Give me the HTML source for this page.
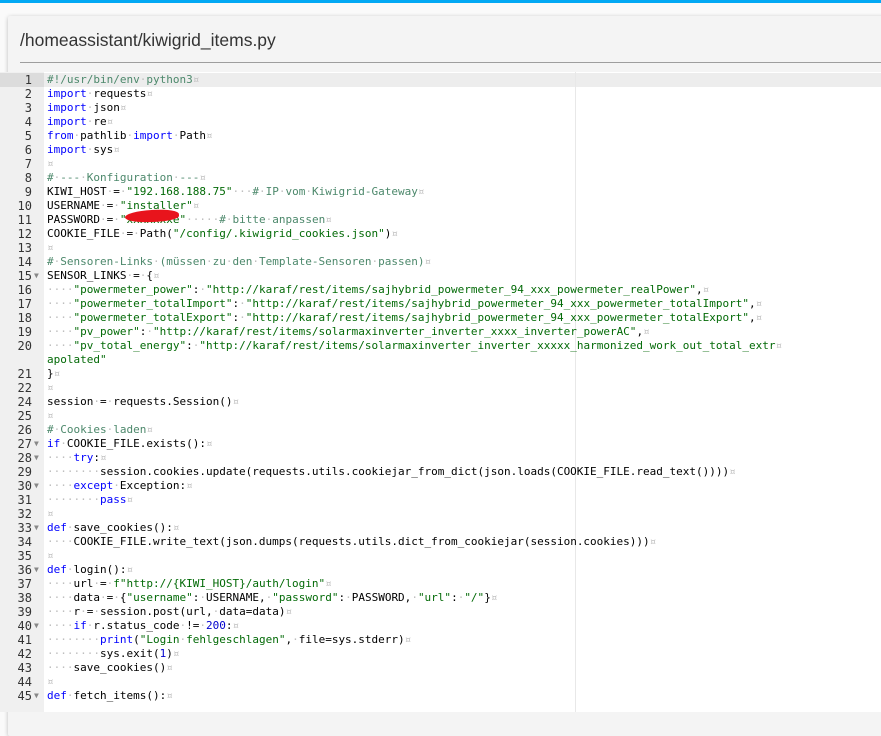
<!DOCTYPE html>
<html><head><meta charset="utf-8">
<style>
*{margin:0;padding:0;box-sizing:border-box}
html,body{width:881px;height:703px;overflow:hidden;background:#fafafa;font-family:"Liberation Sans",sans-serif}
.top{position:absolute;left:0;top:0;width:881px;height:3px;background:#03a9f4}
.card{position:absolute;left:8px;top:16px;width:900px;height:720px;background:#f4f4f4;box-shadow:0 1px 4px rgba(0,0,0,.25);border-radius:2px}
.title{position:absolute;left:20px;top:30px;font-size:17.5px;color:#333}
.hr{position:absolute;left:20px;top:62px;width:870px;height:1px;background:#9e9e9e}
.ed{position:absolute;left:0;top:72px;width:881px;height:640px;background:#fff;overflow:hidden}
.gut{position:absolute;left:0;top:0;width:44px;height:100%;background:#f0f0f0}
.pm{position:absolute;left:575px;top:0;width:1px;height:100%;background:#e8e8e8}
.act{position:absolute;left:44px;top:1px;width:837px;height:14px;background:#ededed}
.gact{position:absolute;left:0;top:1px;width:44px;height:14px;background:#dcdcdc}
.code{position:absolute;left:0;top:1px;width:881px;font-family:"DejaVu Sans Mono","Liberation Mono",monospace;font-size:11px;line-height:14px;color:#000;white-space:normal}
.r{height:14px;position:relative}
.ln{position:absolute;left:0;width:32px;text-align:right;color:#333;white-space:pre;font-size:12px}
.f{position:absolute;left:34px;color:#888;font-size:8px}
.t{position:absolute;left:47px;white-space:pre}
b{font-weight:normal;color:#bfbfbf}
.k{color:#0000ff}.s{color:#036a07}.c{color:#4c886b}.n{color:#0000cd}
.red{position:absolute;left:125px;top:210px;width:54px;height:12px;background:#e8141c;border-radius:50% 45% 40% 50%;transform:rotate(-3deg)}
</style></head><body>
<div class="top"></div>
<div class="card"></div>
<div class="title">/homeassistant/kiwigrid_items.py</div>
<div class="hr"></div>
<div class="ed">
<div class="gut"></div>
<div class="act"></div><div class="gact"></div>
<div class="pm"></div>
<div class="code">
<div class="r"><span class="ln">1</span><span class="t"><span class="c">#!/usr/bin/env<b>·</b>python3</span><b>¤</b></span></div>
<div class="r"><span class="ln">2</span><span class="t"><span class="k">import</span><b>·</b>requests<b>¤</b></span></div>
<div class="r"><span class="ln">3</span><span class="t"><span class="k">import</span><b>·</b>json<b>¤</b></span></div>
<div class="r"><span class="ln">4</span><span class="t"><span class="k">import</span><b>·</b>re<b>¤</b></span></div>
<div class="r"><span class="ln">5</span><span class="t"><span class="k">from</span><b>·</b>pathlib<b>·</b><span class="k">import</span><b>·</b>Path<b>¤</b></span></div>
<div class="r"><span class="ln">6</span><span class="t"><span class="k">import</span><b>·</b>sys<b>¤</b></span></div>
<div class="r"><span class="ln">7</span><span class="t"><b>¤</b></span></div>
<div class="r"><span class="ln">8</span><span class="t"><span class="c">#<b>·</b>---<b>·</b>Konfiguration<b>·</b>---</span><b>¤</b></span></div>
<div class="r"><span class="ln">9</span><span class="t">KIWI_HOST<b>·</b>=<b>·</b><span class="s">"192.168.188.75"</span><b>···</b><span class="c">#<b>·</b>IP<b>·</b>vom<b>·</b>Kiwigrid-Gateway</span><b>¤</b></span></div>
<div class="r"><span class="ln">10</span><span class="t">USERNAME<b>·</b>=<b>·</b><span class="s">"installer"</span><b>¤</b></span></div>
<div class="r"><span class="ln">11</span><span class="t">PASSWORD<b>·</b>=<b>·</b><span class="s">"xxxxxxxe"</span><b>·····</b><span class="c">#<b>·</b>bitte<b>·</b>anpassen</span><b>¤</b></span></div>
<div class="r"><span class="ln">12</span><span class="t">COOKIE_FILE<b>·</b>=<b>·</b>Path(<span class="s">"/config/.kiwigrid_cookies.json"</span>)<b>¤</b></span></div>
<div class="r"><span class="ln">13</span><span class="t"><b>¤</b></span></div>
<div class="r"><span class="ln">14</span><span class="t"><span class="c">#<b>·</b>Sensoren-Links<b>·</b>(müssen<b>·</b>zu<b>·</b>den<b>·</b>Template-Sensoren<b>·</b>passen)</span><b>¤</b></span></div>
<div class="r"><span class="ln">15</span><span class="f">▼</span><span class="t">SENSOR_LINKS<b>·</b>=<b>·</b>{<b>¤</b></span></div>
<div class="r"><span class="ln">16</span><span class="t"><b>····</b><span class="s">"powermeter_power"</span>:<b>·</b><span class="s">"http://karaf/rest/items/sajhybrid_powermeter_94_xxx_powermeter_realPower"</span>,<b>¤</b></span></div>
<div class="r"><span class="ln">17</span><span class="t"><b>····</b><span class="s">"powermeter_totalImport"</span>:<b>·</b><span class="s">"http://karaf/rest/items/sajhybrid_powermeter_94_xxx_powermeter_totalImport"</span>,<b>¤</b></span></div>
<div class="r"><span class="ln">18</span><span class="t"><b>····</b><span class="s">"powermeter_totalExport"</span>:<b>·</b><span class="s">"http://karaf/rest/items/sajhybrid_powermeter_94_xxx_powermeter_totalExport"</span>,<b>¤</b></span></div>
<div class="r"><span class="ln">19</span><span class="t"><b>····</b><span class="s">"pv_power"</span>:<b>·</b><span class="s">"http://karaf/rest/items/solarmaxinverter_inverter_xxxx_inverter_powerAC"</span>,<b>¤</b></span></div>
<div class="r"><span class="ln">20</span><span class="t"><b>····</b><span class="s">"pv_total_energy"</span>:<b>·</b><span class="s">"http://karaf/rest/items/solarmaxinverter_inverter_xxxxx_harmonized_work_out_total_extr</span><b>¤</b></span></div>
<div class="r"><span class="t"><span class="s">apolated"</span></span></div>
<div class="r"><span class="ln">21</span><span class="t">}<b>¤</b></span></div>
<div class="r"><span class="ln">22</span><span class="t"><b>¤</b></span></div>
<div class="r"><span class="ln">24</span><span class="t">session<b>·</b>=<b>·</b>requests.Session()<b>¤</b></span></div>
<div class="r"><span class="ln">25</span><span class="t"><b>¤</b></span></div>
<div class="r"><span class="ln">26</span><span class="t"><span class="c">#<b>·</b>Cookies<b>·</b>laden</span><b>¤</b></span></div>
<div class="r"><span class="ln">27</span><span class="f">▼</span><span class="t"><span class="k">if</span><b>·</b>COOKIE_FILE.exists():<b>¤</b></span></div>
<div class="r"><span class="ln">28</span><span class="f">▼</span><span class="t"><b>····</b><span class="k">try</span>:<b>¤</b></span></div>
<div class="r"><span class="ln">29</span><span class="t"><b>········</b>session.cookies.update(requests.utils.cookiejar_from_dict(json.loads(COOKIE_FILE.read_text())))<b>¤</b></span></div>
<div class="r"><span class="ln">30</span><span class="f">▼</span><span class="t"><b>····</b><span class="k">except</span><b>·</b>Exception:<b>¤</b></span></div>
<div class="r"><span class="ln">31</span><span class="t"><b>········</b><span class="k">pass</span><b>¤</b></span></div>
<div class="r"><span class="ln">32</span><span class="t"><b>¤</b></span></div>
<div class="r"><span class="ln">33</span><span class="f">▼</span><span class="t"><span class="k">def</span><b>·</b>save_cookies():<b>¤</b></span></div>
<div class="r"><span class="ln">34</span><span class="t"><b>····</b>COOKIE_FILE.write_text(json.dumps(requests.utils.dict_from_cookiejar(session.cookies)))<b>¤</b></span></div>
<div class="r"><span class="ln">35</span><span class="t"><b>¤</b></span></div>
<div class="r"><span class="ln">36</span><span class="f">▼</span><span class="t"><span class="k">def</span><b>·</b>login():<b>¤</b></span></div>
<div class="r"><span class="ln">37</span><span class="t"><b>····</b>url<b>·</b>=<b>·</b><span class="s">f"http://{KIWI_HOST}/auth/login"</span><b>¤</b></span></div>
<div class="r"><span class="ln">38</span><span class="t"><b>····</b>data<b>·</b>=<b>·</b>{<span class="s">"username"</span>:<b>·</b>USERNAME,<b>·</b><span class="s">"password"</span>:<b>·</b>PASSWORD,<b>·</b><span class="s">"url"</span>:<b>·</b><span class="s">"/"</span>}<b>¤</b></span></div>
<div class="r"><span class="ln">39</span><span class="t"><b>····</b>r<b>·</b>=<b>·</b>session.post(url,<b>·</b>data=data)<b>¤</b></span></div>
<div class="r"><span class="ln">40</span><span class="f">▼</span><span class="t"><b>····</b><span class="k">if</span><b>·</b>r.status_code<b>·</b>!=<b>·</b><span class="n">200</span>:<b>¤</b></span></div>
<div class="r"><span class="ln">41</span><span class="t"><b>········</b><span class="k">print</span>(<span class="s">"Login<b>·</b>fehlgeschlagen"</span>,<b>·</b>file=sys.stderr)<b>¤</b></span></div>
<div class="r"><span class="ln">42</span><span class="t"><b>········</b>sys.exit(<span class="n">1</span>)<b>¤</b></span></div>
<div class="r"><span class="ln">43</span><span class="t"><b>····</b>save_cookies()<b>¤</b></span></div>
<div class="r"><span class="ln">44</span><span class="t"><b>¤</b></span></div>
<div class="r"><span class="ln">45</span><span class="f">▼</span><span class="t"><span class="k">def</span><b>·</b>fetch_items():<b>¤</b></span></div>
</div>
</div>
<div class="red"></div>
</body></html>
